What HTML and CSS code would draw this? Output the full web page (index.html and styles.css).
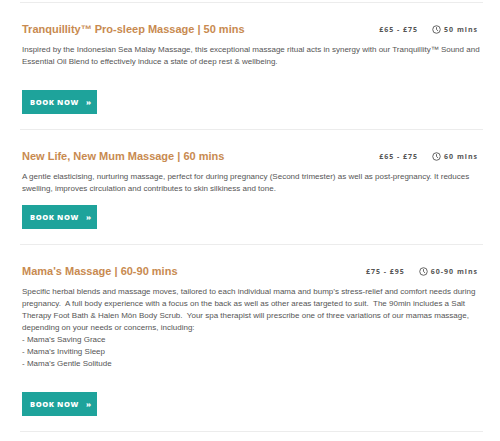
FILE: index.html
```html
<!DOCTYPE html>
<html lang="en">
<head>
    <meta charset="UTF-8">
    <meta name="viewport" content="width=device-width, initial-scale=1.0">
    <title>Treatments</title>
    <link rel="stylesheet" href="styles.css">
</head>
<body>
    <div class="treatments">
        <div class="treatment">
            <div class="treatment-head">
                <h3>Tranquillity™ Pro-sleep Massage | 50 mins</h3>
                <div class="meta">
                    <span class="price">£65 - £75</span>
                    <span class="duration">
                        <svg viewBox="0 0 10 10" width="9" height="9"><circle cx="5" cy="5" r="4.2" fill="none" stroke="#555" stroke-width="1"/><path d="M5 2.4V5L6.8 6.6" fill="none" stroke="#555" stroke-width="1"/></svg>
                        50 mins
                    </span>
                </div>
            </div>
            <p class="desc">Inspired by the Indonesian Sea Malay Massage, this exceptional massage ritual acts in synergy with our Tranquillity™ Sound and Essential Oil Blend to effectively induce a state of deep rest &amp; wellbeing.<br>&nbsp;</p>
            <a href="#" class="book">BOOK NOW <span>»</span></a>
        </div>

        <div class="treatment">
            <div class="treatment-head">
                <h3>New Life, New Mum Massage | 60 mins</h3>
                <div class="meta">
                    <span class="price">£65 - £75</span>
                    <span class="duration">
                        <svg viewBox="0 0 10 10" width="9" height="9"><circle cx="5" cy="5" r="4.2" fill="none" stroke="#555" stroke-width="1"/><path d="M5 2.4V5L6.8 6.6" fill="none" stroke="#555" stroke-width="1"/></svg>
                        60 mins
                    </span>
                </div>
            </div>
            <p class="desc">A gentle elasticising, nurturing massage, perfect for during pregnancy (Second trimester) as well as post-pregnancy. It reduces swelling, improves circulation and contributes to skin silkiness and tone.</p>
            <a href="#" class="book">BOOK NOW <span>»</span></a>
        </div>

        <div class="treatment">
            <div class="treatment-head">
                <h3>Mama's Massage | 60-90 mins</h3>
                <div class="meta">
                    <span class="price">£75 - £95</span>
                    <span class="duration">
                        <svg viewBox="0 0 10 10" width="9" height="9"><circle cx="5" cy="5" r="4.2" fill="none" stroke="#555" stroke-width="1"/><path d="M5 2.4V5L6.8 6.6" fill="none" stroke="#555" stroke-width="1"/></svg>
                        60-90 mins
                    </span>
                </div>
            </div>
            <p class="desc">Specific herbal blends and massage moves, tailored to each individual mama and bump’s stress-relief and comfort needs during pregnancy.&nbsp; A full body experience with a focus on the back as well as other areas targeted to suit.&nbsp; The 90min includes a Salt Therapy Foot Bath &amp; Halen Môn Body Scrub.&nbsp; Your spa therapist will prescribe one of three variations of our mamas massage, depending on your needs or concerns, including:<br>- Mama’s Saving Grace<br>- Mama’s Inviting Sleep<br>- Mama’s Gentle Solitude<br>&nbsp;</p>
            <a href="#" class="book">BOOK NOW <span>»</span></a>
        </div>
    </div>
</body>
</html>
```

FILE: styles.css
```css
body {
    margin: 0;
    background-color: #fff;
    font-family: "Liberation Sans", Arial, sans-serif;
}

.treatments {
    margin-left: 20px;
    width: 463px;
    border-top: 1px solid #ececec;
    margin-top: 2px;
}

.treatment {
    padding: 19px 2px 15px 2px;
    border-bottom: 1px solid #ececec;
}

.treatment-head {
    display: flex;
    justify-content: space-between;
    align-items: center;
    padding-right: 3px;
}

h3 {
    margin: 0;
    font-size: 11px;
    font-weight: bold;
    color: #c88a50;
    line-height: 14px;
}

.meta {
    display: flex;
    align-items: center;
    gap: 14px;
    font-family: "Open Sans", sans-serif;
    font-size: 7px;
    font-weight: bold;
    letter-spacing: 1px;
    color: #555;
}

.duration {
    display: flex;
    align-items: center;
    gap: 3px;
}

.desc {
    margin: 8px 0 10px 0;
    font-size: 8px;
    line-height: 12px;
    color: #555;
}

.book {
    display: flex;
    align-items: center;
    gap: 7px;
    width: 75px;
    height: 24px;
    box-sizing: border-box;
    padding-left: 8px;
    white-space: nowrap;
    background-color: #1ea39b;
    color: #fff;
    text-decoration: none;
    font-family: "Open Sans", sans-serif;
    font-size: 7.5px;
    font-weight: 800;
    letter-spacing: 0.6px;
}
```
